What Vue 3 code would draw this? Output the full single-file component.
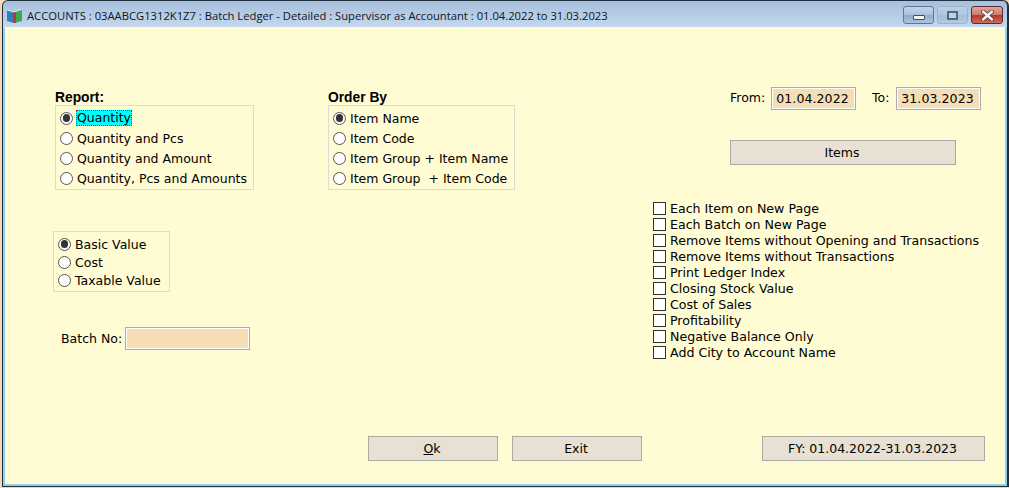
<script setup>
const reports = ['Quantity', 'Quantity and Pcs', 'Quantity and Amount', 'Quantity, Pcs and Amounts']
const orders = ['Item Name', 'Item Code', 'Item Group + Item Name', 'Item Group  + Item Code']
const values = ['Basic Value', 'Cost', 'Taxable Value']
const checks = [
  'Each Item on New Page',
  'Each Batch on New Page',
  'Remove Items without Opening and Transactions',
  'Remove Items without Transactions',
  'Print Ledger Index',
  'Closing Stock Value',
  'Cost of Sales',
  'Profitability',
  'Negative Balance Only',
  'Add City to Account Name'
]
</script>

<template>
  <div class="desk">
    <div class="window">
      <header class="titlebar">
        <svg class="appicon" width="17" height="17" viewBox="0 0 17 17">
          <path d="M1 3 L8 5 V16 L1 14 Z" fill="#2f7fc0" />
          <path d="M9 5 L16 3 V14 L9 16 Z" fill="#3fa652" />
          <path d="M7 5 H10 V16 H7 Z" fill="#c8352c" />
          <path d="M1 3 L8 5 L15 2" fill="none" stroke="#dfe9ee" stroke-width="1" />
        </svg>
        <span class="title">ACCOUNTS : 03AABCG1312K1Z7 : Batch Ledger - Detailed : Supervisor as Accountant : 01.04.2022 to 31.03.2023</span>
        <div class="controls">
          <div class="ctl min"><i></i></div>
          <div class="ctl max"><i></i></div>
          <div class="ctl close">
            <svg width="15" height="11" viewBox="0 0 15 11">
              <path d="M3 1.5 L12 9.5 M12 1.5 L3 9.5" stroke="#4a3a3a" stroke-width="4" stroke-linecap="round" />
              <path d="M3 1.5 L12 9.5 M12 1.5 L3 9.5" stroke="#f4f4f4" stroke-width="2.4" stroke-linecap="round" />
            </svg>
          </div>
        </div>
      </header>

      <main class="client">
        <div class="columns">
          <section class="col-left">
            <h3 class="group-label report-label">Report:</h3>
            <div class="box report-box">
              <label v-for="(r, i) in reports" :key="r" class="opt row20">
                <input type="radio" name="report" :checked="i === 0" />
                <span :class="{ focused: i === 0 }">{{ r }}</span>
              </label>
            </div>
            <div class="box value-box">
              <label v-for="(v, i) in values" :key="v" class="opt row18">
                <input type="radio" name="value" :checked="i === 0" />
                <span>{{ v }}</span>
              </label>
            </div>
            <div class="batch">
              <span class="batch-label">Batch No:</span>
              <div class="field batch-field"></div>
            </div>
          </section>

          <section class="col-mid">
            <h3 class="group-label">Order By</h3>
            <div class="box order-box">
              <label v-for="(o, i) in orders" :key="o" class="opt row20">
                <input type="radio" name="order" :checked="i === 0" />
                <span class="pre">{{ o }}</span>
              </label>
            </div>
          </section>

          <section class="col-right">
            <div class="dates">
              <span class="from-label">From:</span>
              <div class="field date">01.04.2022</div>
              <span class="to-label">To:</span>
              <div class="field date">31.03.2023</div>
            </div>
            <button class="btn items">Items</button>
            <div class="checks">
              <label v-for="c in checks" :key="c" class="check">
                <input type="checkbox" />
                <span>{{ c }}</span>
              </label>
            </div>
          </section>
        </div>

        <footer class="footer">
          <button class="btn act"><u>O</u>k</button>
          <button class="btn act">Exit</button>
          <button class="btn fy">FY: 01.04.2022-31.03.2023</button>
        </footer>
      </main>
    </div>
  </div>
</template>

<style>
html, body { margin: 0; padding: 0; overflow: hidden; }
</style>

<style scoped>
.desk {
  width: 1009px;
  height: 488px;
  background: #f3d9b8;
  box-sizing: border-box;
  padding: 0 0 1px 2px;
  font-family: "DejaVu Sans", Verdana, sans-serif;
  font-size: 12.5px;
  color: #000;
}
.window {
  height: 100%;
  box-sizing: border-box;
  border: 1px solid #20303c;
  border-right-width: 2px;
  border-radius: 6px 6px 0 0;
  background: linear-gradient(#a7bfdc, #c5d8ee 27px, #8fd0ee 27px);
  display: flex;
  flex-direction: column;
  overflow: hidden;
}
.titlebar {
  height: 26px;
  flex: none;
  display: flex;
  align-items: center;
  padding-left: 3px;
  position: relative;
}
.appicon { margin-top: 2px; flex: none; }
.title {
  margin-left: 4px;
  margin-top: 2px;
  font-family: "Open Sans", "Noto Sans", sans-serif;
  font-size: 11.22px;
  color: #0d1620;
  white-space: nowrap;
}
.controls {
  margin-left: auto;
  margin-right: 4px;
  display: flex;
  align-items: flex-start;
  align-self: flex-start;
  padding-top: 5px;
  gap: 3px;
}
.ctl {
  width: 31px;
  height: 18px;
  box-sizing: border-box;
  border: 1px solid #5d7696;
  border-radius: 3px;
  background: linear-gradient(#c3d6ea, #a9c2dc 50%, #8fadcd 52%, #a8c3dd);
  display: flex;
  align-items: center;
  justify-content: center;
}
.max { border-color: #9db3cc; background: linear-gradient(#bcd0e6, #aec6df 50%, #a5bed9 52%, #b2cae2); }
.close {
  width: 32px;
  border-color: #5b2b3c;
  background: linear-gradient(#e3a79c, #d0766a 50%, #b8382a 52%, #cf6a58);
}
.min i {
  display: block;
  width: 12px;
  height: 5px;
  margin-top: 4px;
  box-sizing: border-box;
  border: 1px solid #3f5068;
  border-radius: 1px;
  background: #f2f4f6;
}
.max i {
  display: block;
  width: 11px;
  height: 9px;
  box-sizing: border-box;
  border: 2px solid #56687e;
  background: #c2d2e4;
}
.client {
  flex: 1;
  margin: 0 2px 2px 2px;
  background: #fffbd2;
  display: flex;
  flex-direction: column;
  min-height: 0;
}
.columns {
  display: flex;
  padding: 60px 0 0 48px;
}
.col-left { width: 275px; flex: none; padding-top: 2px; }
.col-mid { width: 325px; flex: none; padding-top: 2px; }
.col-right { flex: 1; }
.group-label {
  margin: 0;
  padding-top: 1px;
  font-size: 13.8px;
  font-weight: 700;
  line-height: 15px;
  font-family: "Liberation Sans", Arial, sans-serif;
}
.report-label { margin-left: 2px; }
.box {
  box-sizing: border-box;
  border: 1px solid #dcdcd6;
}
.report-box {
  margin-left: 2px;
  width: 199px;
  height: 85px;
  padding: 2px 0 0 4px;
}
.order-box {
  width: 187px;
  height: 85px;
  padding: 2px 0 0 4px;
}
.value-box {
  margin-top: 41px;
  width: 117px;
  height: 61px;
  padding: 3px 0 0 4px;
}
.opt {
  display: flex;
  align-items: center;
  white-space: nowrap;
}
.row20 { height: 20px; }
.row18 { height: 18px; }
.pre { white-space: pre; }
.opt input {
  appearance: none;
  margin: 0 3px 0 0;
  width: 13px;
  height: 13px;
  flex: none;
  box-sizing: border-box;
  border: 1.3px solid #555;
  border-radius: 50%;
  background: #fff;
  display: grid;
  place-items: center;
}
.opt input:checked::before {
  content: "";
  width: 7.5px;
  height: 7.5px;
  border-radius: 50%;
  background: #333;
}
.opt span { padding-left: 1px; }
.opt .focused {
  padding: 0 1px;
  margin-left: 0;
  height: 16px;
  line-height: 15px;
  box-sizing: border-box;
  background: #00ffff;
  outline: 1px dotted #e0103a;
  outline-offset: -1px;
}
.batch {
  margin-top: 35px;
  display: flex;
  align-items: center;
  padding-left: 8px;
}
.batch-label { width: 64px; }
.field {
  box-sizing: border-box;
  border: 1px solid #aaaab4;
  box-shadow: inset 0 0 0 1px #fff;
  background: #f5deb5;
}
.batch-field { width: 125px; height: 23px; }
.dates {
  display: flex;
  align-items: center;
  padding-left: 77px;
  height: 23px;
}
.from-label { width: 41px; margin-top: -2px; }
.to-label { margin-left: 16px; width: 24px; margin-top: -2px; }
.date {
  width: 85px;
  height: 23px;
  line-height: 21px;
  padding-right: 2px;
  text-align: center;
  letter-spacing: 0.1px;
}
.btn {
  appearance: none;
  box-sizing: border-box;
  display: block;
  height: 25px;
  padding: 0 2px 0 0;
  border: 1px solid #aaa9a5;
  border-radius: 0;
  background: #e8e0d2;
  font: inherit;
  color: #000;
}
.items { margin: 30px 0 0 77px; width: 226px; }
.checks { margin-top: 35px; font-size: 12.6px; }
.check {
  display: flex;
  align-items: center;
  height: 16px;
  white-space: nowrap;
}
.check input {
  appearance: none;
  margin: 0 4px 0 0;
  width: 13px;
  height: 13px;
  flex: none;
  box-sizing: border-box;
  border: 1px solid #333;
  background: #fff;
}
.footer {
  margin-top: auto;
  display: flex;
  padding: 0 0 23px 363px;
}
.act { width: 130px; margin-right: 14px; }
.fy { width: 223px; margin-left: 106px; }
</style>
